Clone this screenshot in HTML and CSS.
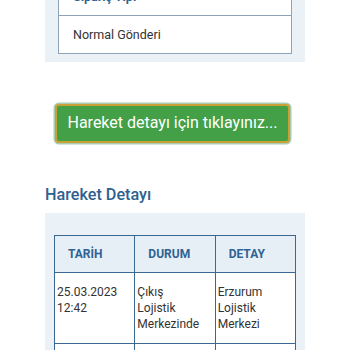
FILE: index.html
```html
<!DOCTYPE html>
<html lang="tr">
<head>
<meta charset="utf-8">
<link rel="stylesheet" href="styles.css">
</head>
<body>
<div class="page">
  <section class="panel panel-top">
    <div class="info-box">
      <div class="info-label">Sipariş Tipi</div>
      <div class="info-value">Normal Gönderi</div>
    </div>
  </section>

  <button class="detail-btn" type="button">Hareket detayı için tıklayınız...</button>

  <h2 class="section-title">Hareket Detayı</h2>

  <section class="panel panel-table">
    <table class="moves">
      <thead>
        <tr><th>TARİH</th><th>DURUM</th><th>DETAY</th></tr>
      </thead>
      <tbody>
        <tr>
          <td>25.03.2023<br>12:42</td>
          <td>Çıkış<br>Lojistik<br>Merkezinde</td>
          <td>Erzurum<br>Lojistik<br>Merkezi</td>
        </tr>
        <tr>
          <td>24.03.2023<br>18:10</td>
          <td>Giriş<br>Lojistik<br>Merkezinde</td>
          <td>Erzurum<br>Lojistik<br>Merkezi</td>
        </tr>
      </tbody>
    </table>
  </section>
</div>
</body>
</html>
```

FILE: styles.css
```css
* { box-sizing: border-box; }

html, body {
  margin: 0;
  padding: 0;
  background: #ffffff;
  font-family: Roboto, "Noto Sans", "Liberation Sans", sans-serif;
  color: #333333;
  overflow: hidden;
}

.page {
  width: 260px;
  margin: 0 auto;
  display: flex;
  flex-direction: column;
}

.panel {
  background: #eaf1f7;
}

.panel-top {
  margin-top: -36px;
  padding: 13px 13px 8px;
}

.info-box {
  background: #ffffff;
  border: 1px solid #8ea3b6;
}

.info-label,
.info-value {
  font-size: 12.5px;
  line-height: 15px;
  padding: 11px 14px;
}

.info-label {
  font-weight: 700;
  color: #2f6394;
  border-bottom: 1px solid #8ea3b6;
}

.info-value {
  color: #333333;
}

.detail-btn {
  align-self: flex-start;
  margin: 42px 0 0 10px;
  width: 235px;
  height: 39px;
  padding: 0 0 2px;
  border: 2px solid #c9a135;
  border-radius: 4px;
  box-shadow: 0 0 0 1.5px #a8ccb2;
  background: #43a047;
  color: #ffffff;
  font-family: Roboto, "Noto Sans", "Liberation Sans", sans-serif;
  font-size: 16px;
  text-align: center;
}

.section-title {
  margin: 42px 0 8px;
  font-size: 16.2px;
  font-weight: 500;
  line-height: 20px;
  color: #2e6190;
}

.panel-table {
  padding: 22px 9px 0;
}

.moves {
  width: 242px;
  border-collapse: collapse;
  table-layout: fixed;
  font-size: 12px;
}

.moves th,
.moves td {
  border: 1px solid #3a6891;
  text-align: left;
  vertical-align: top;
}

.moves th {
  background: #e7eff6;
  color: #2f6394;
  font-weight: 700;
  line-height: 14px;
  padding: 11px 4px 11px 13px;
}

.moves td {
  background: #ffffff;
  color: #333333;
  line-height: 16px;
  padding: 11px 2px;
}
```
